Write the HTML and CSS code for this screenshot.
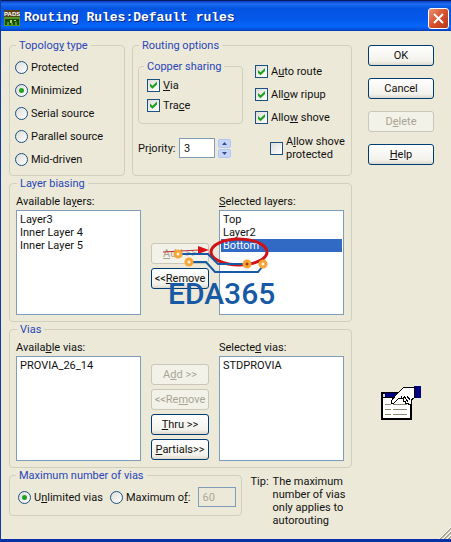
FILE: index.html
```html
<!DOCTYPE html>
<html lang="en">

<head>
    <meta charset="UTF-8">
    <meta name="viewport" content="width=device-width, initial-scale=1.0">
    <title>Routing Rules:Default rules</title>
    <link rel="stylesheet" href="styles.css">
</head>

<body>
    <div class="dialog">
        <header class="title-bar">
            <svg class="app-icon" width="16" height="16" viewBox="0 0 16 16" aria-hidden="true">
                <rect width="16" height="16" fill="#5a3f1c" />
                <rect y="7" width="16" height="9" fill="#4f9a22" />
                <path d="M1 15V9h14v6h-2v-3h-2v3H9v-2H7v2H5v-3H3v3z" fill="#1c4a12" />
                <path d="M6 10h2v3H6zM10 10h2v1h-2z" fill="#a8d860" />
                <text x="0" y="6" class="app-text">PADS</text>
            </svg>
            <h1>Routing Rules:Default rules</h1>
            <button class="close" aria-label="Close">
                <svg width="13" height="13" viewBox="0 0 13 13"><path d="M2 2l9 9M11 2l-9 9" stroke="#fff" stroke-width="2" /></svg>
            </button>
        </header>

        <main class="content">
            <div class="top-groups">
                <fieldset class="topology">
                    <legend>Topolog<u>y</u> type</legend>
                    <label><input type="radio" name="topology">Protected</label>
                    <label><input type="radio" name="topology" checked>Minimized</label>
                    <label><input type="radio" name="topology">Serial source</label>
                    <label><input type="radio" name="topology">Parallel source</label>
                    <label><input type="radio" name="topology">Mid-driven</label>
                </fieldset>

                <fieldset class="routing">
                    <legend>Routing options</legend>
                    <fieldset class="copper">
                        <legend>Copper sharing</legend>
                        <label><input type="checkbox" checked><span><u>V</u>ia</span></label>
                        <label><input type="checkbox" checked><span>Tra<u>c</u>e</span></label>
                    </fieldset>
                    <div class="allow">
                        <label><input type="checkbox" checked><span>A<u>u</u>to route</span></label>
                        <label><input type="checkbox" checked><span>All<u>o</u>w ripup</span></label>
                        <label><input type="checkbox" checked><span>Allo<u>w</u> shove</span></label>
                    </div>
                    <div class="priority">
                        <label for="priority"><span>Pr<u>i</u>ority:</span></label>
                        <input type="text" id="priority" value="3">
                        <div class="spinner">
                            <button aria-label="Increase"><svg width="5" height="3" viewBox="0 0 5 3"><path d="M0 3l2.500-3L5 3z" fill="#35507e" /></svg></button>
                            <button aria-label="Decrease"><svg width="5" height="3" viewBox="0 0 5 3"><path d="M0 0l2.500 3L5 0z" fill="#35507e" /></svg></button>
                        </div>
                    </div>
                    <label class="protected"><input type="checkbox"><span>A<u>l</u>low shove protected</span></label>
                </fieldset>
            </div>

            <div class="actions">
                <button>OK</button>
                <button>Cancel</button>
                <button disabled>D<u>e</u>lete</button>
                <button><u>H</u>elp</button>
            </div>

            <fieldset class="transfer">
                <legend>Layer biasing</legend>
                <div class="list">
                    <label for="available-layers">Available la<u>y</u>ers:</label>
                    <select id="available-layers" multiple>
                        <option>Layer3</option>
                        <option>Inner Layer 4</option>
                        <option>Inner Layer 5</option>
                    </select>
                </div>
                <div class="move">
                    <button disabled><u>A</u>dd &gt;&gt;</button>
                    <button>&lt;&lt;<u>R</u>emove</button>
                </div>
                <div class="list">
                    <label for="selected-layers"><u>S</u>elected layers:</label>
                    <select id="selected-layers" multiple>
                        <option>Top</option>
                        <option>Layer2</option>
                        <option selected>Bottom</option>
                    </select>
                </div>
                <svg class="mark" width="124" height="74" viewBox="160 228 124 74">
                    <ellipse cx="239" cy="246" rx="28" ry="13" fill="none" stroke="#cf1218" stroke-width="3" />
                    <path d="M163 246l36-2" stroke="#c22630" stroke-width="1" />
                    <path d="M198 240l11 4-11 4z" fill="#d81118" />
                    <g fill="none" stroke="#1659a5" stroke-width="2">
                        <path d="M181 248h27l10 10h26" />
                        <path d="M192 256h14l9 10h43l4-5" />
                    </g>
                    <g fill="#fff3dc" stroke="#f9a535" stroke-width="3">
                        <circle cx="178" cy="248" r="3" />
                        <circle cx="189" cy="256" r="3" />
                        <circle cx="247" cy="258" r="3" fill="#a83a1c" />
                        <circle cx="263" cy="258" r="3" />
                    </g>
                    <text x="168" y="298" class="mark-text">EDA365</text>
                </svg>
            </fieldset>

            <fieldset class="transfer">
                <legend>Vias</legend>
                <div class="list">
                    <label for="available-vias">Availa<u>b</u>le vias:</label>
                    <select id="available-vias" multiple>
                        <option>PROVIA_26_14</option>
                    </select>
                </div>
                <div class="move">
                    <button disabled>A<u>d</u>d &gt;&gt;</button>
                    <button disabled>&lt;&lt;Re<u>m</u>ove</button>
                    <button><u>T</u>hru &gt;&gt;</button>
                    <button><u>P</u>artials&gt;&gt;</button>
                </div>
                <div class="list">
                    <label for="selected-vias">Selecte<u>d</u> vias:</label>
                    <select id="selected-vias" multiple>
                        <option>STDPROVIA</option>
                    </select>
                </div>
            </fieldset>

            <svg class="hand" width="40" height="36" viewBox="0 0 40 36" shape-rendering="crispEdges" aria-hidden="true">
                <path d="M1 8h29v26H1z" fill="#fff" stroke="#000" stroke-width="2" />
                <path d="M4 8h16v4H4z" fill="#000080" />
                <path d="M2 9h2v3H2z" fill="#dcdcdc" />
                <path d="M2 12h27v1H2z" fill="#000" />
                <path d="M4 19h6v1H4zM12 19h14v1H12zM4 24h6v1H4zM12 24h14v1H12zM4 29h6v1H4zM12 29h14v1H12z" fill="#8c8c78" />
                <path d="M33 1h7v12h-7z" fill="#000080" />
                <path d="M10 16l6-7 7-7h10v11l-3 2v4h-3v-1h-3v-2h-2v-3l-5 1-4 4h-3z" fill="#fff" stroke="#000" />
                <path d="M20 11l3 5M23 11l4 6M26 11l3 4" fill="none" stroke="#000" />
            </svg>

            <div class="bottom-groups">
                <fieldset class="maximum">
                    <legend>Maximum number of vias</legend>
                    <label><input type="radio" name="max" checked><span>U<u>n</u>limited vias</span></label>
                    <label><input type="radio" name="max"><span>Maximum o<u>f</u>:</span></label>
                    <input type="text" value="60" aria-label="Maximum vias" disabled>
                </fieldset>
                <div class="tip">
                    <span>Tip:</span>
                    <p>The maximum number of vias only applies to autorouting</p>
                </div>
            </div>
        </main>

        <svg class="grip" width="12" height="12" viewBox="0 0 12 12" aria-hidden="true">
            <path d="M1 12L12 1M5 12l7-7M9 12l3-3" stroke="#a5a294" stroke-width="2" />
            <path d="M0 12L12 0M4 12l8-8M8 12l4-4" stroke="#fff" />
        </svg>
    </div>
</body>

</html>
```

FILE: styles.css
```css
* {
    box-sizing: border-box;
}

body {
    margin: 0;
    background-color: #ece9d8;
    color: #111;
    font: 11px/13px Roboto, "Liberation Sans", sans-serif;
}

button,
input,
select {
    font: inherit;
    color: inherit;
}

.dialog {
    position: relative;
    min-height: 100vh;
    border-left: 1px solid #0a3f9c;
    border-bottom: 3px solid #0831a8;
}

/* title bar */
.title-bar {
    display: flex;
    align-items: center;
    gap: 4px;
    height: 31px;
    padding: 4px 2px 0 3px;
    border-top: 1px solid #071a5c;
    background: linear-gradient(#0a3fc4, #1d6cf0 10%, #0454e2 25%, #0558ea 60%, #0566fc 85%, #0650d8 95%, #0338a8);
}

.title-bar h1 {
    flex: 1;
    margin: 0;
    color: #fff;
    font: bold 13px/16px "Liberation Mono", monospace;
    text-shadow: 1px 1px 0 #0a2880;
    white-space: nowrap;
}

.app-text {
    fill: #fff;
    font: bold 6px "Liberation Sans", sans-serif;
}

.close {
    display: flex;
    align-items: center;
    justify-content: center;
    width: 21px;
    height: 21px;
    padding: 0;
    border: 1px solid #fff;
    border-radius: 3px;
    background: linear-gradient(135deg, #e89478, #d9502c 50%, #b83818);
}

/* layout */
.content {
    display: grid;
    grid-template-columns: minmax(0, 1fr) 66px;
    column-gap: 16px;
    row-gap: 1px;
    padding: 8px 17px 0 8px;
}

.top-groups,
.transfer,
.bottom-groups {
    grid-column: 1;
}

.top-groups {
    display: grid;
    grid-template-columns: 116px 1fr;
    gap: 7px;
}

fieldset {
    min-width: 0;
    margin: 0;
    padding: 4px 5px;
    border: 1px solid #d0d0bf;
    border-radius: 4px;
}

legend {
    margin-left: 1px;
    padding: 0 3px;
    color: #2a46b8;
}

label {
    white-space: nowrap;
}

.topology label,
.routing label,
.maximum label {
    display: flex;
    align-items: center;
    gap: 3px;
}

.topology label,
.allow label {
    height: 23px;
}

/* ticks and radios */
input[type="radio"],
input[type="checkbox"] {
    flex: none;
    appearance: none;
    display: grid;
    place-items: center;
    width: 13px;
    height: 13px;
    margin: 0;
    border: 1px solid #1c5180;
    background: linear-gradient(135deg, #dcdcd7, #fff);
}

input[type="radio"] {
    border-radius: 50%;
}

input[type="radio"]:checked::before {
    content: "";
    width: 5px;
    height: 5px;
    border-radius: 50%;
    background: #21a121;
}

input[type="checkbox"]:checked::before {
    content: "";
    width: 9px;
    height: 9px;
    background: #21a121;
    clip-path: polygon(11% 33%, 39% 58%, 89% 11%, 89% 44%, 39% 92%, 11% 67%);
}

input[type="text"] {
    height: 20px;
    padding: 0 4px;
    border: 1px solid #7f9db9;
    background: #fff;
}

input[type="text"]:disabled {
    background: transparent;
    color: #aca899;
}

/* routing options */
.routing {
    display: grid;
    grid-template-columns: 105px 1fr;
    gap: 6px 12px;
    align-content: start;
    padding-top: 8px;
}

.copper {
    align-self: start;
    padding: 2px 8px 8px;
}

.copper legend {
    margin-left: -3px;
}

.copper label {
    height: 20px;
}

.priority {
    display: flex;
    align-items: center;
}

.priority input {
    width: 36px;
    margin: 0 3px 0 auto;
}

.spinner {
    display: grid;
    gap: 1px;
    margin-right: 12px;
}

.spinner button {
    display: grid;
    place-items: center;
    width: 13px;
    height: 9px;
    padding: 0;
    border: 1px solid #b4c6f0;
    border-radius: 2px;
    background: #c6d5fb;
}

.protected {
    padding-left: 15px;
}

.protected span {
    width: 62px;
    white-space: normal;
}

/* push buttons */
.actions button,
.move button {
    height: 21px;
    padding: 0;
    border: 1px solid #003c74;
    border-radius: 3px;
    background: linear-gradient(#fff, #f2f1ea 80%, #dcd8cc);
    white-space: nowrap;
}

.actions button:disabled,
.move button:disabled {
    border-color: #c9c7ba;
    background: #f3f2e8;
    color: #a8a594;
}

.actions {
    display: flex;
    flex-direction: column;
    gap: 12px;
    padding-top: 6px;
}

/* list pairs */
.transfer {
    position: relative;
    display: grid;
    grid-template-columns: 1fr 58px 1fr;
    gap: 10px;
    padding: 5px 7px 6px 6px;
}

.list {
    display: grid;
    gap: 2px;
}

.list select {
    width: 100%;
    height: 105px;
    padding: 2px 1px;
    border: 1px solid #7f9db9;
    border-radius: 0;
    background: #fff;
    overflow: hidden;
    outline: none;
}

.list option {
    min-height: 13px;
    padding: 0 2px;
    line-height: 13px;
}

.list option:checked {
    background: linear-gradient(#316ac5, #316ac5);
    -webkit-text-fill-color: #fff;
}

.move {
    display: flex;
    flex-direction: column;
    justify-content: center;
    gap: 4px;
    padding-top: 21px;
}

/* logo drawn over the layer lists */
.mark {
    position: absolute;
    left: 150px;
    top: 44px;
    pointer-events: none;
}

.mark-text {
    fill: #1659a5;
    font: 500 30px Roboto, "Liberation Sans", sans-serif;
}

.hand {
    grid-column: 2;
    place-self: center;
    margin-top: 14px;
}

/* bottom row */
.bottom-groups {
    display: flex;
    align-items: flex-start;
    gap: 9px;
}

.maximum {
    flex: none;
    display: flex;
    align-items: center;
    gap: 7px;
    padding: 5px 5px 8px 8px;
}

.maximum legend {
    margin-left: -2px;
}

.maximum input[type="text"] {
    width: 38px;
}

.tip {
    display: flex;
    gap: 4px;
    padding-top: 6px;
}

.tip p {
    width: 76px;
    margin: 0;
}

.grip {
    position: absolute;
    right: 0;
    bottom: 0;
}
```
